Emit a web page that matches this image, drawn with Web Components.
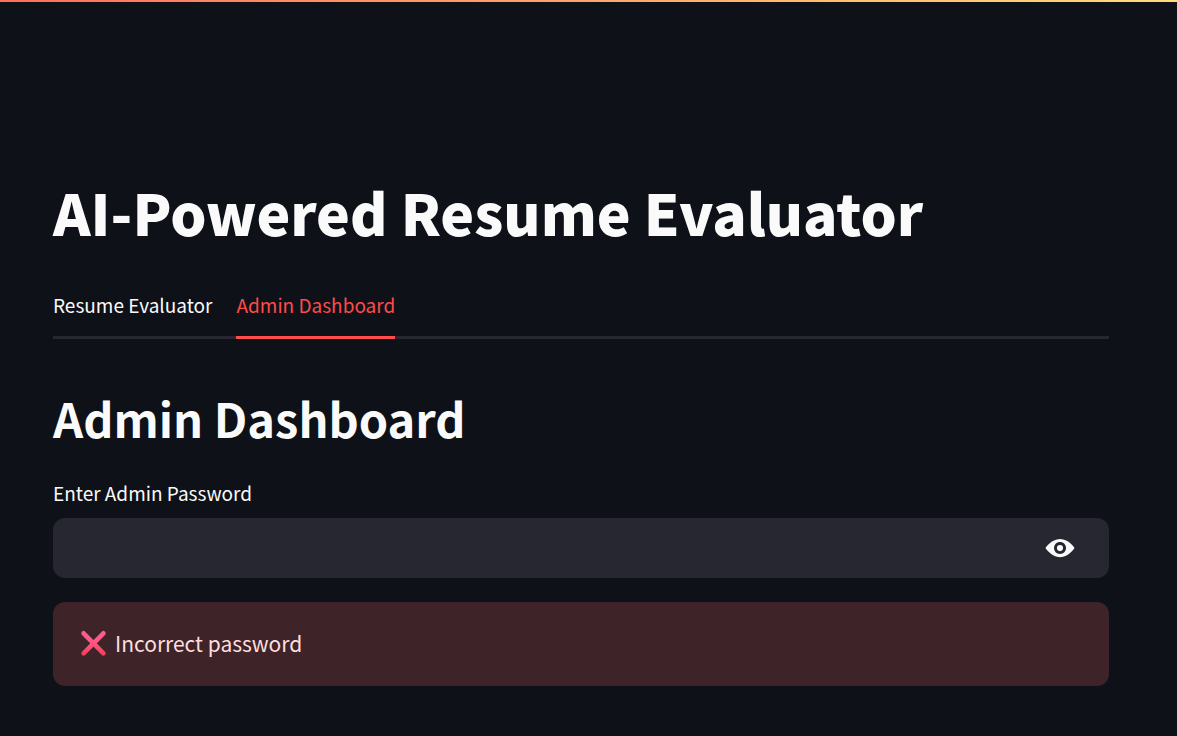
<!DOCTYPE html>
<html lang="en">
<head>
<meta charset="utf-8">
<meta name="viewport" content="width=device-width, initial-scale=1">
<title>AI-Powered Resume Evaluator</title>
<style>
  body {
    margin: 0;
    background: #0e1117;
    color: #fafafa;
    font-family: "Noto Sans CJK SC", "Open Sans", sans-serif;
  }
</style>
</head>
<body>
<app-shell>
  <page-heading level="1">AI-Powered Resume Evaluator</page-heading>
  <tab-bar>
    <tab-item>Resume Evaluator</tab-item>
    <tab-item selected>Admin Dashboard</tab-item>
  </tab-bar>
  <page-heading level="2">Admin Dashboard</page-heading>
  <password-field label="Enter Admin Password"></password-field>
  <error-alert>Incorrect password</error-alert>
</app-shell>

<script>
class BaseElement extends HTMLElement {
  constructor() {
    super();
    this.attachShadow({ mode: 'open' });
  }
  render(html) { this.shadowRoot.innerHTML = html; }
}

customElements.define('app-shell', class extends BaseElement {
  connectedCallback() {
    this.render(`
      <style>
        :host { display: block; }
        .accent { height: 2px; background: linear-gradient(90deg, #ff6f5c, #ffdc7c); }
        main { padding: 169px 68px 48px 53px; }
      </style>
      <div class="accent"></div>
      <main><slot></slot></main>`);
  }
});

customElements.define('page-heading', class extends BaseElement {
  connectedCallback() {
    const tag = this.getAttribute('level') === '1' ? 'h1' : 'h2';
    this.render(`
      <style>
        :host { display: block; }
        h1, h2 { margin: 0; }
        h1 { font-size: 57px; line-height: 80px; font-weight: 900; padding-bottom: 31px; }
        h2 { font-size: 47px; line-height: 64px; font-weight: 700; padding: 47px 0 29px; }
      </style>
      <${tag}><slot></slot></${tag}>`);
  }
});

customElements.define('tab-bar', class extends BaseElement {
  connectedCallback() {
    this.render(`
      <style>
        :host { display: block; }
        div { display: flex; gap: 24px; box-shadow: inset 0 -3px #262730; }
      </style>
      <div role="tablist"><slot></slot></div>`);
  }
});

customElements.define('tab-item', class extends BaseElement {
  connectedCallback() {
    this.render(`
      <style>
        :host { display: block; }
        button {
          display: block; margin: 0; border: 0; background: none; cursor: pointer;
          border-bottom: 3px solid transparent; padding: 9px 0 17px;
          font: inherit; font-size: 19px; line-height: 28px; color: inherit;
        }
        :host([selected]) button { color: #ff4b4b; border-color: #ff4b4b; }
      </style>
      <button type="button" role="tab" aria-selected="${this.hasAttribute('selected')}"><slot></slot></button>`);
  }
});

customElements.define('password-field', class extends BaseElement {
  connectedCallback() {
    this.render(`
      <style>
        :host { display: block; }
        label { display: block; font-size: 19px; line-height: 28px; padding-bottom: 11px; }
        .box { display: flex; align-items: center; height: 60px; border-radius: 12px; background: #262730; overflow: hidden; }
        input { flex: 1; min-width: 0; height: 100%; box-sizing: border-box; border: 0; outline: 0; padding: 0 18px;
          background: none; color: inherit; font: inherit; font-size: 21px; }
        button { display: flex; border: 0; background: none; padding: 0 32px; color: inherit; cursor: pointer; }
        svg { display: block; width: 34px; height: 34px; }
      </style>
      <label for="password">${this.getAttribute('label')}</label>
      <div class="box">
        <input id="password" type="password" autocomplete="off">
        <button type="button" aria-label="Show password">
          <svg viewBox="0 0 8 8" fill="currentColor" aria-hidden="true">
            <path d="M4.03 1.9C1.95 1.9.6 4 .6 4s1.35 2.15 3.43 2.15C6.11 6.15 7.4 4 7.4 4S6.11 1.9 4.03 1.9zM4 2.6c.83 0 1.42.63 1.42 1.42S4.83 5.42 4 5.42 2.6 4.81 2.6 4.02 3.17 2.6 4 2.6zm0 .7a.72.72 0 1 0 0 1.44A.72.72 0 0 0 4 3.3z"/>
          </svg>
        </button>
      </div>`);
    const input = this.shadowRoot.querySelector('input');
    const button = this.shadowRoot.querySelector('button');
    button.addEventListener('click', () => {
      input.type = input.type === 'password' ? 'text' : 'password';
    });
  }
});

customElements.define('error-alert', class extends BaseElement {
  connectedCallback() {
    this.render(`
      <style>
        :host { display: block; margin-top: 24px; }
        div { display: flex; align-items: center; gap: 8px; padding: 23px 27px 25px; border-radius: 12px;
          background: #3e2428; color: #ffdede; font-size: 21px; line-height: 36px; }
        svg { width: 27px; height: 27px; flex: none; }
      </style>
      <div role="alert">
        <svg viewBox="0 0 27 27" role="img" aria-label="Error">
          <defs><linearGradient id="cross" x1="0" y1="0" x2="0" y2="1">
            <stop offset="0" stop-color="#ff5a93"/><stop offset="0.55" stop-color="#ff5580"/><stop offset="1" stop-color="#f5405c"/>
          </linearGradient></defs>
          <path d="M3.6 3.3L23.4 23.3M23.4 3.3L3.6 23.3" fill="none" stroke="url(#cross)" stroke-width="4.6" stroke-linecap="round"/>
        </svg>
        <span><slot></slot></span>
      </div>`);
  }
});
</script>
</body>
</html>
